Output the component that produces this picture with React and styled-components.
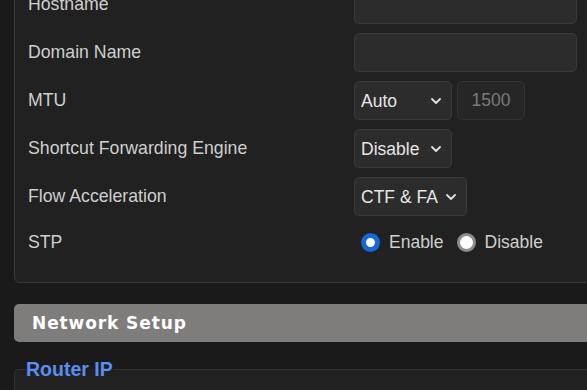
import styled, { createGlobalStyle } from 'styled-components'

const GlobalStyle = createGlobalStyle`
  html, body {
    margin: 0;
    background: #1a1a1a;
    overflow: hidden;
  }
  body {
    font-family: "Liberation Sans", Arial, sans-serif;
  }
`

const Page = styled.div`
  width: 620px;
  margin-top: -28px;
  padding: 0 14px;
  display: flex;
  flex-direction: column;
`

const Panel = styled.fieldset`
  margin: 0;
  padding: 12px 20px 22px 13px;
  background: #212121;
  border: 1px solid #393939;
  border-radius: 6px;
  display: flex;
  flex-direction: column;
  gap: 9px;
`

const Row = styled.div`
  display: flex;
  align-items: center;
  min-height: ${p => p.$h || 39}px;
`

const Label = styled.div`
  width: 326px;
  flex: none;
  color: #cfcfcf;
  font-size: 17.7px;
`

const Controls = styled.div`
  display: flex;
  align-items: center;
  gap: 5px;
`

const TextInput = styled.input`
  box-sizing: border-box;
  width: ${p => p.$w || 223}px;
  height: 39px;
  background: #2c2c2c;
  border: 1px solid #3a3a3a;
  border-radius: 5px;
  color: ${p => (p.disabled ? '#7a7a7a' : '#e6e6e6')};
  font: 17.5px "Liberation Sans", Arial, sans-serif;
  text-align: ${p => (p.$center ? 'center' : 'left')};
  padding: 0 7px;
  outline: none;
  &:disabled {
    background: #262626;
    border-color: #333;
  }
`

const chevron =
  "url(\"data:image/svg+xml;utf8,<svg xmlns='http://www.w3.org/2000/svg' width='10' height='6' viewBox='0 0 10 6'><path d='M1 1l4 4 4-4' fill='none' stroke='%23e0e0e0' stroke-width='1.8' stroke-linecap='round' stroke-linejoin='round'/></svg>\")"

const Select = styled.select`
  box-sizing: border-box;
  appearance: none;
  width: ${p => p.$w}px;
  height: 39px;
  background: #2c2c2c ${chevron} no-repeat right 10px center;
  border: 1px solid #3a3a3a;
  border-radius: 5px;
  color: #e6e6e6;
  font: 17.5px "Liberation Sans", Arial, sans-serif;
  padding: 0 6px;
  outline: none;
`

const RadioGroup = styled.div`
  display: flex;
  align-items: center;
  padding-left: 7px;
`

const RadioLabel = styled.label`
  display: flex;
  align-items: center;
  gap: 9px;
  margin-right: 13px;
  color: #cfcfcf;
  font-size: 17.5px;
`

const Radio = styled.input`
  appearance: none;
  box-sizing: border-box;
  margin: 0;
  width: 19px;
  height: 19px;
  border-radius: 50%;
  background: #fff;
  border: 3px solid #8c8c8c;
  &:checked {
    border: 5px solid #1568d6;
  }
`

const SectionHeader = styled.div`
  margin-top: 21px;
  height: 38px;
  display: flex;
  align-items: center;
  padding-left: 18px;
  background: #7e7d7b;
  border-radius: 5px;
  color: #fff;
  font: bold 17px "DejaVu Sans", Verdana, sans-serif;
  letter-spacing: 0.9px;
`

const Group = styled.fieldset`
  margin: 16px 0 0;
  padding: 0 10px 40px;
  background: #212121;
  border: 1px solid #333;
  border-radius: 5px;
`

const Legend = styled.legend`
  padding: 0 1px;
  color: #5b8ef0;
  font: bold 19.5px "Liberation Sans", Arial, sans-serif;
`

const rows = [
  { label: 'Hostname', type: 'text' },
  { label: 'Domain Name', type: 'text' },
]

export default function App() {
  return (
    <>
      <GlobalStyle />
      <Page>
        <Panel>
          {rows.map(r => (
            <Row key={r.label}>
              <Label>{r.label}</Label>
              <TextInput />
            </Row>
          ))}
          <Row>
            <Label>MTU</Label>
            <Controls>
              <Select $w={98} defaultValue="auto">
                <option value="auto">Auto</option>
                <option value="manual">Manual</option>
              </Select>
              <TextInput $w={68} $center disabled defaultValue="1500" />
            </Controls>
          </Row>
          <Row>
            <Label>Shortcut Forwarding Engine</Label>
            <Select $w={98} defaultValue="disable">
              <option value="disable">Disable</option>
              <option value="enable">Enable</option>
            </Select>
          </Row>
          <Row>
            <Label>Flow Acceleration</Label>
            <Select $w={113} defaultValue="ctf">
              <option value="ctf">CTF &amp; FA</option>
              <option value="none">None</option>
            </Select>
          </Row>
          <Row $h={35}>
            <Label>STP</Label>
            <RadioGroup>
              <RadioLabel>
                <Radio type="radio" name="stp" defaultChecked />
                Enable
              </RadioLabel>
              <RadioLabel>
                <Radio type="radio" name="stp" />
                Disable
              </RadioLabel>
            </RadioGroup>
          </Row>
        </Panel>
        <SectionHeader>Network Setup</SectionHeader>
        <Group>
          <Legend>Router IP</Legend>
        </Group>
      </Page>
    </>
  )
}
